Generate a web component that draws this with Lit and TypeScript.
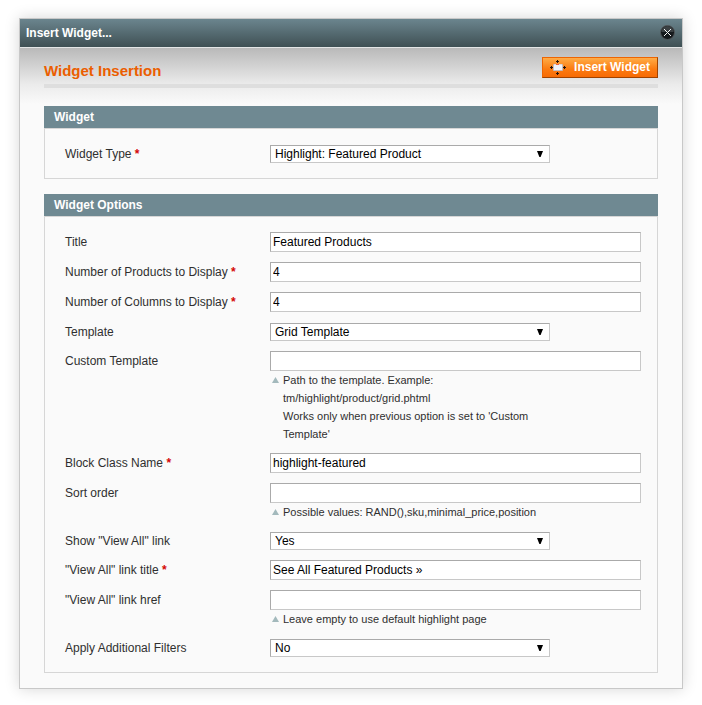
import { LitElement, html, css, svg, nothing } from "lit";
import { customElement, property } from "lit/decorators.js";

interface Field {
  id: string;
  label: string;
  kind: "text" | "select";
  value?: string;
  required?: boolean;
  note?: string[];
}

const widgetFields: Field[] = [
  { id: "type", label: "Widget Type", kind: "select", value: "Highlight: Featured Product", required: true },
];

const optionFields: Field[] = [
  { id: "title", label: "Title", kind: "text", value: "Featured Products" },
  { id: "products", label: "Number of Products to Display", kind: "text", value: "4", required: true },
  { id: "columns", label: "Number of Columns to Display", kind: "text", value: "4", required: true },
  { id: "template", label: "Template", kind: "select", value: "Grid Template" },
  {
    id: "custom",
    label: "Custom Template",
    kind: "text",
    note: [
      "Path to the template. Example:",
      "tm/highlight/product/grid.phtml",
      "Works only when previous option is set to 'Custom Template'",
    ],
  },
  { id: "block", label: "Block Class Name", kind: "text", value: "highlight-featured", required: true },
  {
    id: "sort",
    label: "Sort order",
    kind: "text",
    note: ["Possible values: RAND(),sku,minimal_price,position"],
  },
  { id: "viewall", label: 'Show "View All" link', kind: "select", value: "Yes" },
  { id: "linktitle", label: '"View All" link title', kind: "text", value: "See All Featured Products »", required: true },
  {
    id: "linkhref",
    label: '"View All" link href',
    kind: "text",
    note: ["Leave empty to use default highlight page"],
  },
  { id: "filters", label: "Apply Additional Filters", kind: "select", value: "No" },
];

@customElement("field-group")
export class FieldGroup extends LitElement {
  @property() heading = "";
  @property({ attribute: false }) fields: Field[] = [];

  static styles = css`
    :host {
      display: block;
    }
    .heading {
      margin: 0;
      padding: 0 10px;
      background: #6f8992;
      color: #fff;
      font-size: 12px;
      font-weight: bold;
      line-height: 22px;
    }
    .box {
      border: 1px solid #d6d6d6;
      padding: 10px 16px 10px 20px;
      background: #fafafa;
    }
    .row {
      display: grid;
      grid-template-columns: 205px minmax(0, 1fr);
      align-items: start;
    }
    .label {
      padding: 6px 0 5px;
      line-height: 18px;
    }
    .required {
      color: #d40707;
      font-weight: bold;
    }
    .value {
      padding: 5px 0;
    }
    .value.compact {
      padding-top: 6px;
    }
    .input,
    .select {
      display: block;
      box-sizing: border-box;
      margin: 0;
      border: 1px solid;
      border-color: #aaa #c8c8c8 #c8c8c8 #aaa;
      border-radius: 0;
      background: #fff;
      color: #000;
      font: 12px "Liberation Sans", Arial, sans-serif;
      outline: none;
      width: 100%;
    }
    .input {
      height: 20px;
      padding: 0 2px;
    }
    .select {
      appearance: none;
      height: 18px;
      padding: 0 20px 0 4px;
    }
    .picker {
      position: relative;
      max-width: 280px;
    }
    .arrow {
      position: absolute;
      right: 7px;
      top: 6px;
      width: 6px;
      height: 6px;
      background: #000;
      clip-path: polygon(0 0, 100% 0, 60% 100%, 40% 100%);
      pointer-events: none;
    }
    .note {
      display: flex;
      gap: 4px;
      max-width: 280px;
      padding-left: 2px;
      box-sizing: border-box;
      font-size: 11px;
      line-height: 18px;
    }
    .marker {
      flex: none;
      width: 7px;
      height: 6px;
      margin-top: 6px;
      background: #a3b9bc;
      clip-path: polygon(50% 0, 100% 100%, 0 100%);
    }
    .line {
      display: block;
    }
  `;

  private renderControl(f: Field) {
    if (f.kind === "select") {
      return html`<div class="picker">
        <select class="select" id=${f.id}>
          <option>${f.value}</option>
        </select>
        <span class="arrow"></span>
      </div>`;
    }
    return html`<input class="input" type="text" id=${f.id} .value=${f.value ?? ""} />`;
  }

  render() {
    return html`
      <h2 class="heading">${this.heading}</h2>
      <div class="box">
        ${this.fields.map(
          (f) => html`<div class="row">
            <label class="label" for=${f.id}
              >${f.label}${f.required ? html` <span class="required">*</span>` : nothing}</label
            >
            <div class="value ${f.kind === "select" ? "compact" : ""}">
              ${this.renderControl(f)}
              ${f.note
                ? html`<div class="note">
                    <span class="marker"></span>
                    <span>${f.note.map((n) => html`<span class="line">${n}</span>`)}</span>
                  </div>`
                : nothing}
            </div>
          </div>`,
        )}
      </div>
    `;
  }
}

const insertIcon = svg`
  <rect x="3" y="4" width="10" height="7" rx="1" fill="#c4bcc0"/>
  <rect x="4" y="4" width="8" height="1" fill="#dcd8dc"/>
  <rect x="6" y="4" width="3" height="1" fill="#f0643c"/>
  <rect x="4" y="5" width="8" height="5" fill="#f1f1f6"/>
  <path d="M7 0h1v1h1v1h-1v1h-1v-1h-1v-1h1z M7 12h1v1h1v1h-1v1h-1v-1h-1v-1h1z M0 7h1v-1h1v1h1v1h-1v1h-1v-1h-1z M13 7h1v-1h1v1h1v1h-1v1h-1v-1h-1z" fill="#24120a"/>`;

@customElement("app-root")
export class AppRoot extends LitElement {
  static styles = css`
    :host {
      display: block;
      padding: 18px 19px 16px;
      background: #fff;
      color: #2f2f2f;
      font: 12px/18px "Liberation Sans", Arial, sans-serif;
    }
    .dialog {
      border: 1px solid #c8c8c8;
      background: #fafafa;
      box-shadow: 0 0 14px rgba(0, 0, 0, 0.16);
    }
    .titlebar {
      display: flex;
      align-items: center;
      justify-content: space-between;
      height: 28px;
      padding: 0 7px 0 6px;
      border-bottom: 1px solid #e4e6e6;
      background: linear-gradient(#6b858e, #3f5054);
      color: #fff;
      font-weight: bold;
    }
    .close {
      width: 15px;
      height: 15px;
      margin-bottom: 2px;
      padding: 0;
      border: 0;
      background: none;
    }
    .glyph {
      display: block;
    }
    .content {
      padding: 9px 24px 15px;
      background: linear-gradient(#b9b9b9, #ebebeb 36px, #fafafa 56px) no-repeat;
    }
    .header {
      display: flex;
      align-items: flex-start;
      justify-content: space-between;
      padding-bottom: 2px;
      border-bottom: 4px solid #dedede;
    }
    .title {
      margin: 0;
      padding-top: 3px;
      color: #eb5e00;
      font-size: 15px;
      line-height: 22px;
    }
    .insert {
      display: flex;
      align-items: center;
      gap: 8px;
      height: 21px;
      margin: 0;
      padding: 0 7px 1px;
      border: 1px solid;
      border-color: #ed6502 #a04300 #a04300 #ed6502;
      background: linear-gradient(#ffac47, #fb7a10 60%, #f76b05);
      color: #fff;
      font: bold 12px "Liberation Sans", Arial, sans-serif;
    }
    .group {
      margin-top: 15px;
    }
    .first {
      margin-top: 18px;
    }
  `;

  render() {
    return html`
      <div class="dialog">
        <div class="titlebar">
          <span>Insert Widget...</span>
          <button class="close" aria-label="Close">
            <svg class="glyph" width="15" height="15" viewBox="0 0 15 15">
              <circle cx="7.5" cy="7.5" r="7" fill="#15191c" stroke="#54585b" />
              <path d="M1.5 7a6 6 0 0 1 12 0z" fill="#3b4043" />
              <path d="M4 4l7 7M11 4l-7 7" stroke="#f4f4f4" />
            </svg>
          </button>
        </div>
        <div class="content">
          <div class="header">
            <h1 class="title">Widget Insertion</h1>
            <button class="insert">
              <svg class="glyph" width="16" height="15" viewBox="0 0 16 15">${insertIcon}</svg>
              <span>Insert Widget</span>
            </button>
          </div>
          <field-group class="group first" heading="Widget" .fields=${widgetFields}></field-group>
          <field-group class="group" heading="Widget Options" .fields=${optionFields}></field-group>
        </div>
      </div>
    `;
  }
}
